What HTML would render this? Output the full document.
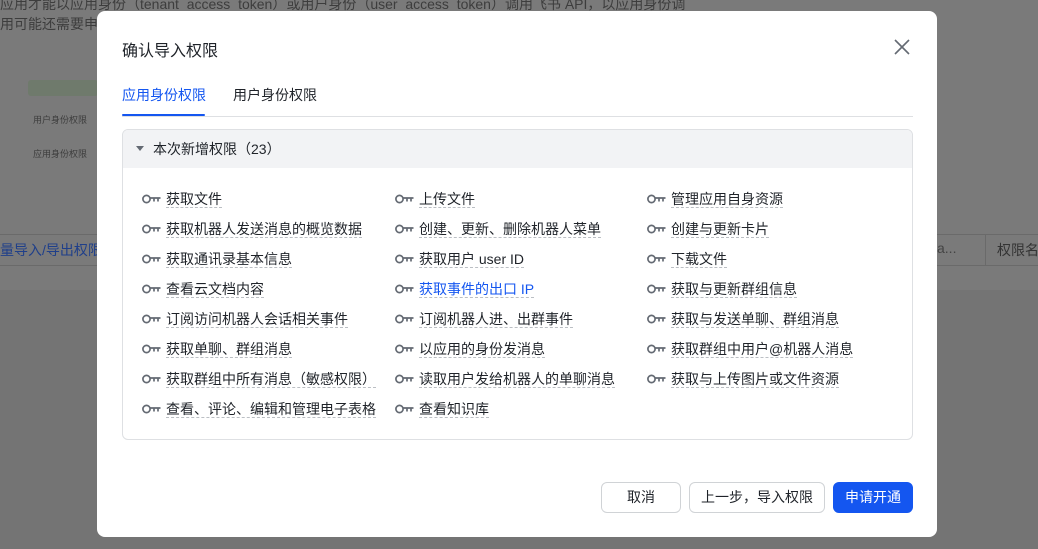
<!DOCTYPE html>
<html><head><meta charset="utf-8"><style>
*{margin:0;padding:0;box-sizing:border-box}
body{width:1038px;height:549px;overflow:hidden;background:#747474;font-family:"Liberation Sans","Noto Sans CJK SC",sans-serif;position:relative}
.bgtop{position:absolute;left:0;top:0;width:1038px;height:290px;background:#7a7a7a}
.bgtext{position:absolute;color:#3d3d3d;font-size:14px;white-space:nowrap}
.bgrow{position:absolute;left:0;top:234px;width:1038px;height:32px;border-top:1px solid #6a6a6a;border-bottom:1px solid #6a6a6a}
.modal{position:absolute;left:97px;top:11px;width:840px;height:526px;background:#fff;border-radius:8px}
.title{position:absolute;left:25px;top:26px;font-size:16px;color:#1f2329}
.close{position:absolute;left:796px;top:27px}
.tab{position:absolute;top:74px;font-size:14px;color:#1f2329}
.tab.a{color:#1456f0}
.ul{position:absolute;left:25px;top:103px;width:83px;height:2px;background:#1456f0;border-radius:1px}
.div{position:absolute;left:25px;top:105px;width:791px;height:1px;background:#dee0e3}
.box{position:absolute;left:25px;top:118px;width:791px;height:311px;border:1px solid #dee0e3;border-radius:6px;overflow:hidden}
.bh{height:38px;background:#f2f3f5;font-size:14px;color:#1f2329;line-height:38px;padding-left:30px;position:relative}
.bh:before{content:"";position:absolute;left:13px;top:16px;border-left:4px solid transparent;border-right:4px solid transparent;border-top:5px solid #646a73}
.it{position:absolute;font-size:14px;color:#1f2329;white-space:nowrap;height:20px;line-height:20px}
.it span{border-bottom:1px dashed #bbbfc4}
.it svg{position:absolute;left:-24px;top:5px}
.it.b{color:#1456f0}
.btn{position:absolute;top:482px;height:31px;border:1px solid #d0d3d6;border-radius:6px;font-size:14px;color:#1f2329;text-align:center;line-height:29px;background:#fff}
.btn.p{background:#1456f0;border-color:#1456f0;color:#fff}
</style></head><body>
<div class="bgtop"></div>
<div class="bgtext" style="left:0;top:-6px">应用才能以应用身份（tenant_access_token）或用户身份（user_access_token）调用飞书 API，以应用身份调</div>
<div class="bgtext" style="left:0;top:14px">用可能还需要申请</div>
<div style="position:absolute;left:28px;top:80px;width:70px;height:16px;background:#6f7a6c;border-radius:3px"></div>
<div class="bgtext" style="left:33px;top:113px;font-size:9px">用户身份权限</div>
<div class="bgtext" style="left:33px;top:147px;font-size:9px">应用身份权限</div>
<div class="bgrow"></div>
<div class="bgtext" style="left:0;top:240px;color:#1f3f8a">量导入/导出权限</div>
<div class="bgtext" style="left:937px;top:240px;color:#444">a...</div>
<div style="position:absolute;left:985px;top:235px;width:1px;height:30px;background:#6a6a6a"></div>
<div class="bgtext" style="left:997px;top:240px;color:#333">权限名</div>

<div class="modal">
<div class="title">确认导入权限</div>
<svg class="close" width="18" height="18" viewBox="0 0 18 18"><path d="M2 2L16 16M16 2L2 16" stroke="#646a73" stroke-width="1.6"/></svg>
<div class="tab a" style="left:25px">应用身份权限</div>
<div class="tab" style="left:136px">用户身份权限</div>
<div class="div"></div><div class="ul"></div>
<div class="box"><div class="bh">本次新增权限（23）</div></div>
</div>
<div id="items"></div>
<script>
var cols=[166,419,671];
var data=[["获取文件","上传文件","管理应用自身资源"],["获取机器人发送消息的概览数据","创建、更新、删除机器人菜单","创建与更新卡片"],["获取通讯录基本信息","获取用户 user ID","下载文件"],["查看云文档内容","获取事件的出口 IP","获取与更新群组信息"],["订阅访问机器人会话相关事件","订阅机器人进、出群事件","获取与发送单聊、群组消息"],["获取单聊、群组消息","以应用的身份发消息","获取群组中用户@机器人消息"],["获取群组中所有消息（敏感权限）","读取用户发给机器人的单聊消息","获取与上传图片或文件资源"],["查看、评论、编辑和管理电子表格","查看知识库",""]];
var key='<svg width="19" height="10" viewBox="0 0 19 10"><circle cx="4.5" cy="5" r="3.6" fill="none" stroke="#646a73" stroke-width="1.7"/><path d="M8 4H18.5M12 4V7.5M16 4V7.5" stroke="#646a73" stroke-width="1.7"/></svg>';
var h="";
data.forEach(function(r,i){r.forEach(function(t,j){if(!t)return;h+='<div class="it'+(i==3&&j==1?' b':'')+'" style="left:'+cols[j]+'px;top:'+(189+i*30)+'px">'+key+'<span>'+t+'</span></div>';});});
document.getElementById("items").innerHTML=h;
</script>
<div class="btn" style="left:601px;width:80px">取消</div>
<div class="btn" style="left:689px;width:136px">上一步，导入权限</div>
<div class="btn p" style="left:833px;width:80px">申请开通</div>
</body></html>
